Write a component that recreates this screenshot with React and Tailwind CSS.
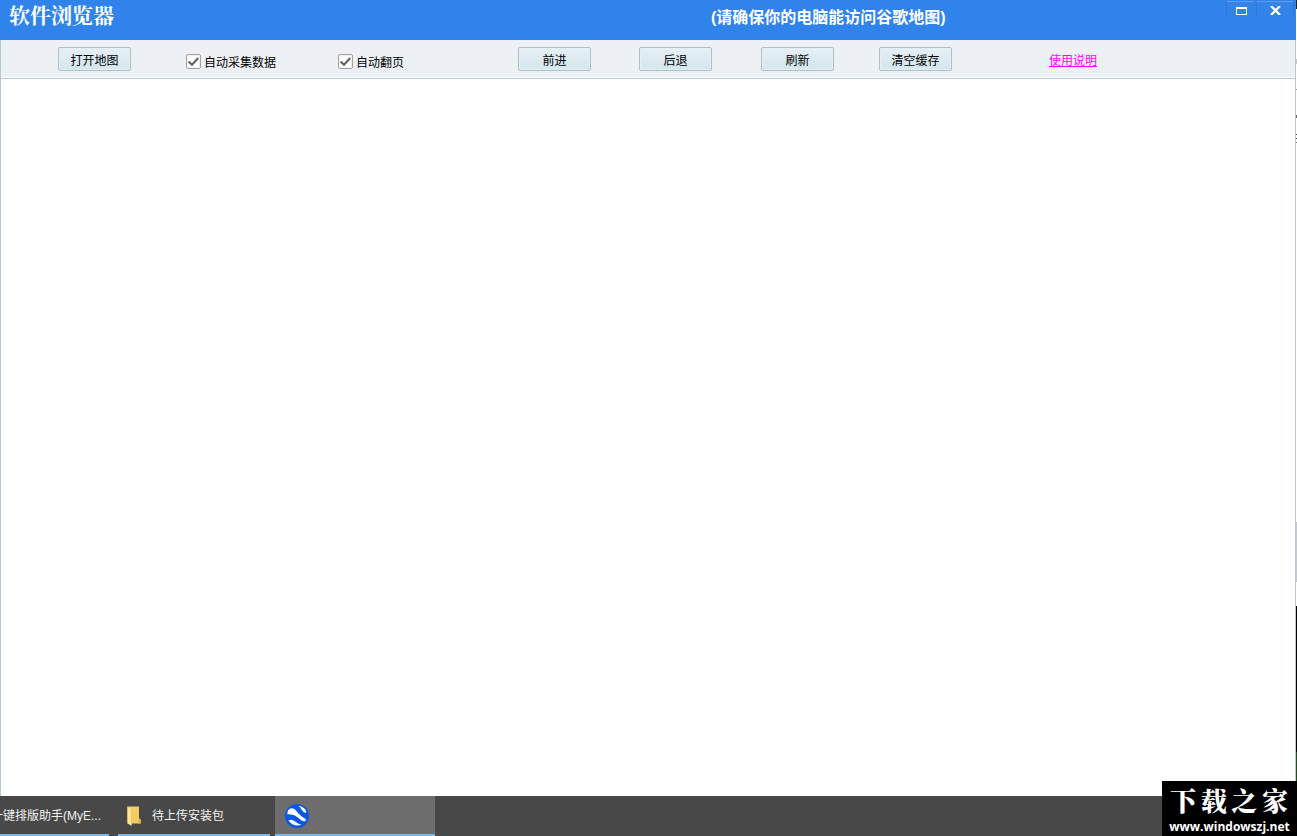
import React from "react";

const toolButtons = ["前进", "后退", "刷新", "清空缓存"];

function ToolButton({ children }) {
  return (
    <button
      type="button"
      className="h-6 w-[73px] whitespace-nowrap rounded-[2px] border border-[#b0bfc6] bg-linear-to-b from-[#e6eff3] to-[#d4e6ee] pt-[3px] text-center text-[12px] leading-5 text-black shadow-[inset_0_0_0_1px_#e4eff4]"
    >
      {children}
    </button>
  );
}

function CheckOption({ id, label }) {
  return (
    <div className="flex items-center gap-[3px] pt-1">
      <span className="grid size-[15px]">
        <input
          id={id}
          type="checkbox"
          defaultChecked
          className="peer col-start-1 row-start-1 size-[15px] appearance-none rounded-[2px] border border-[#a2a2a2] bg-white shadow-[inset_0_0_0_1px_#f1f1f1]"
        />
        <svg
          viewBox="0 0 15 15"
          aria-hidden="true"
          className="pointer-events-none invisible col-start-1 row-start-1 size-[15px] peer-checked:visible"
        >
          <path d="M2.6 7.4 L6 10.8 L12.2 4" fill="none" stroke="#626262" strokeWidth="2.1" />
        </svg>
      </span>
      <label htmlFor={id} className="whitespace-nowrap pt-[3px] text-[12px] leading-4 text-black">
        {label}
      </label>
    </div>
  );
}

function WindowControl({ label, className, children }) {
  return (
    <button
      type="button"
      aria-label={label}
      className={`flex h-4 items-start justify-center border-t border-[#5c9df2] bg-linear-to-b from-[#3784e6] to-[#3083eb] ${className}`}
    >
      {children}
    </button>
  );
}

function TitleBar() {
  return (
    <header className="flex h-10 shrink-0 items-start bg-[#3083eb] text-white">
      <h1 className="w-[711px] pl-[9px] font-['Noto_Serif_CJK_SC','Noto_Sans_CJK_SC',serif] text-[21px] leading-7 font-bold">
        软件浏览器
      </h1>
      <p className="whitespace-nowrap pt-2 text-[16px] leading-5 font-bold">
        (请确保你的电脑能访问谷歌地图)
      </p>
      <div className="ml-auto flex gap-0.5 pt-px pr-0.5">
        <WindowControl label="最大化" className="w-7 border-l border-l-[#2a77dc] pt-[5px] pl-px">
          <svg viewBox="0 0 11 8" className="h-2 w-[11px]" shapeRendering="crispEdges">
            <path d="M0 0H11V8H0ZM1 2V7H10V2Z" fill="#fff" fillRule="evenodd" />
          </svg>
        </WindowControl>
        <WindowControl label="关闭" className="w-[38px] border-x border-x-[#2a77dc] pt-1">
          <svg viewBox="0 0 11 9" className="h-[9px] w-[11px]">
            <path d="M1 0 L10 9 M10 0 L1 9" stroke="#fff" strokeWidth="2.3" />
          </svg>
        </WindowControl>
      </div>
    </header>
  );
}

function Toolbar() {
  return (
    <div className="grid h-[39px] shrink-0 grid-cols-[128px_152px_180px_121px_122px_118px_170px_1fr] items-center border-b border-[#b4c8d8] bg-[#edf0f5] pl-[57px] shadow-[inset_0_-1px_0_#fff]">
      <ToolButton>打开地图</ToolButton>
      <CheckOption id="auto-collect" label="自动采集数据" />
      <CheckOption id="auto-page" label="自动翻页" />
      {toolButtons.map((name) => (
        <ToolButton key={name}>{name}</ToolButton>
      ))}
      <a href="#help" className="justify-self-start pt-[3px] text-[12px] leading-4 text-[#ff00ff] underline">
        使用说明
      </a>
    </div>
  );
}

function DesktopEdge() {
  return (
    <div className="flex w-px shrink-0 flex-col bg-white" aria-hidden="true">
      <div className="h-[9px] bg-[#222]" />
      <div className="mt-[50px] h-[5px] bg-[#c8c8c8]" />
      <div className="mt-[25px] h-px bg-[#999]" />
      <div className="mt-[25px] h-[3px] bg-[#666]" />
      <div className="mt-4 h-px bg-[#444]" />
      <div className="mt-[3px] h-px bg-[#444]" />
      <div className="mt-[3px] h-px bg-[#777]" />
      <div className="mt-auto h-[60px] bg-[#c6cbd0]" />
      <div className="mt-6 h-[146px] bg-black" />
      <div className="h-11 bg-[#244a20]" />
    </div>
  );
}

function FolderIcon() {
  return (
    <svg viewBox="0 0 16 20" className="h-5 w-4 shrink-0" aria-hidden="true">
      <path d="M1.5 .5H13V12.5L14.5 13.5V17.5H1.5Z" fill="#f3cd62" />
      <path d="M13 12.5 L14.8 13.5V17.5H12Z" fill="#e3b645" />
      <path d="M1.5 .5 L5.5 4V19.8L1.5 17.5Z" fill="#ffe69a" />
      <path d="M5.5 4V19.5" stroke="#e6bc55" strokeWidth=".7" />
    </svg>
  );
}

function EarthIcon() {
  return (
    <svg viewBox="0 0 24 24" className="size-6" aria-hidden="true">
      <circle cx="12" cy="12" r="12" fill="#0759e5" />
      <path d="M13.4 2 C17.5 2 21.2 5.2 21.3 8.2 C20.4 9.4 18.6 8.4 17.4 6.8 C16 5 15.4 3.4 13.4 2Z" fill="#fff" />
      <path d="M3.8 5.4 C6.2 3.6 8.8 3.8 11 6.6 C13.6 9.8 15.4 12 20.4 14.8 C21.4 16 20.8 17.4 19.6 17.4 C15 16.6 13.4 12.8 9.6 11.4 C6.6 10.4 4.6 10.4 2.4 10.2 C2.2 8.6 2.8 6.6 3.8 5.4Z" fill="#fff" />
      <path d="M3.4 16.2 C5.8 15 8.8 16 11.2 18.2 C12.8 19.6 14.6 20.2 16.4 20.6 C12.6 22.6 6 21 3.4 16.2Z" fill="#fff" />
    </svg>
  );
}

function Taskbar() {
  return (
    <nav className="flex h-10 shrink-0 bg-[#484848] text-[12px] text-[#f2f2f2]">
      <button
        type="button"
        className="mr-[9px] flex w-[109px] items-center justify-end overflow-hidden whitespace-nowrap border-b-2 border-[#76b9ed] pt-0.5 pr-2"
      >
        一键排版助手(MyE...
      </button>
      <button
        type="button"
        className="mr-[5px] flex w-[152px] items-center gap-[10px] whitespace-nowrap border-b-2 border-[#76b9ed] pt-0.5 pl-2"
      >
        <FolderIcon />
        待上传安装包
      </button>
      <button
        type="button"
        aria-label="软件浏览器"
        className="flex w-40 items-center border-b-2 border-[#76b9ed] bg-[#6d6d6d] pt-0.5 pl-[10px]"
      >
        <EarthIcon />
      </button>
    </nav>
  );
}

function SiteBadge() {
  return (
    <div className="absolute right-0 bottom-0 h-[55px] w-[135px] bg-black pt-1 text-white">
      <div className="flex justify-between pr-[9px] pl-2 font-['Noto_Serif_CJK_SC','Noto_Sans_CJK_SC',serif] text-[26px] leading-[30px] font-black">
        {["下", "载", "之", "家"].map((char) => (
          <span key={char}>{char}</span>
        ))}
      </div>
      <div className="whitespace-nowrap pt-[3px] text-center font-['Open_Sans','Noto_Sans',sans-serif] text-[12px] leading-[18px] font-bold">
        www.windowszj.net
      </div>
    </div>
  );
}

export default function App() {
  return (
    <div className="relative flex h-screen flex-col overflow-hidden bg-white font-['Liberation_Sans','Noto_Sans_CJK_SC',sans-serif]">
      <div className="flex min-h-0 flex-1">
        <div className="flex min-w-0 flex-1 flex-col">
          <TitleBar />
          <div className="flex min-h-0 flex-1 flex-col border-x border-[#b4c8d8]">
            <Toolbar />
            <main className="flex-1 bg-white" />
          </div>
        </div>
        <DesktopEdge />
      </div>
      <Taskbar />
      <SiteBadge />
    </div>
  );
}
